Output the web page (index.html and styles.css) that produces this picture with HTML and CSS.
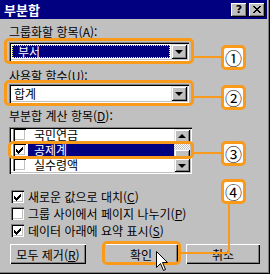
FILE: index.html
```html
<!DOCTYPE html>
<html lang="ko">
<head>
<meta charset="utf-8">
<title>부분합</title>
<link rel="stylesheet" href="styles.css">
</head>
<body>
<div class="win">
  <div class="title">
    <span class="title-text">부분합</span>
    <div class="tbtns">
      <span class="tbtn q">?</span>
      <span class="tbtn"><svg width="8" height="7" viewBox="0 0 8 7" shape-rendering="crispEdges"><path d="M0 0h2v1H0zM6 0h2v1H6zM1 1h2v1H1zM5 1h2v1H5zM2 2h4v1H2zM3 3h2v1H3zM2 4h4v1H2zM1 5h2v1H1zM5 5h2v1H5zM0 6h2v1H0zM6 6h2v1H6z" fill="#000"/></svg></span>
    </div>
  </div>
  <div class="body">
    <div class="label l1">그룹화할 항목(<u>A</u>):</div>
    <div class="combo c1">
      <div class="val"><span class="sel">부서</span></div>
      <div class="ddbtn"><span class="tri-down"></span></div>
    </div>
    <div class="label l2">사용할 함수(<u>U</u>):</div>
    <div class="combo c2">
      <div class="val plain">합계</div>
      <div class="ddbtn"><span class="tri-down"></span></div>
    </div>
    <div class="label l3">부분합 계산 항목(<u>D</u>):</div>
    <div class="list">
      <div class="items">
        <div class="items-inner">
          <div class="item"><span class="cb"></span><span class="txt">국민연금</span></div>
          <div class="item selected"><span class="cb"><svg class="ck" width="9" height="9" viewBox="0 0 9 9" shape-rendering="crispEdges"><path d="M0 3h1v3H0zM1 4h1v3H1zM2 5h1v3H2zM3 4h1v3H3zM4 3h1v3H4zM5 2h1v3H5zM6 1h1v3H6z" fill="#000"/></svg></span><span class="txt">공제계</span></div>
          <div class="item"><span class="cb"></span><span class="txt">실수령액</span></div>
        </div>
      </div>
      <div class="vscroll">
        <div class="sbtn"><span class="tri-up"></span></div>
        <div class="track"><div class="thumb"></div></div>
        <div class="sbtn"><span class="tri-down"></span></div>
      </div>
    </div>
    <div class="checks">
      <div class="chk"><span class="cb"><svg class="ck" width="9" height="9" viewBox="0 0 9 9" shape-rendering="crispEdges"><path d="M0 3h1v3H0zM1 4h1v3H1zM2 5h1v3H2zM3 4h1v3H3zM4 3h1v3H4zM5 2h1v3H5zM6 1h1v3H6z" fill="#000"/></svg></span><span>새로운 값으로 대치(<u>C</u>)</span></div>
      <div class="chk"><span class="cb"></span><span>그룹 사이에서 페이지 나누기(<u>P</u>)</span></div>
      <div class="chk"><span class="cb"><svg class="ck" width="9" height="9" viewBox="0 0 9 9" shape-rendering="crispEdges"><path d="M0 3h1v3H0zM1 4h1v3H1zM2 5h1v3H2zM3 4h1v3H3zM4 3h1v3H4zM5 2h1v3H5zM6 1h1v3H6z" fill="#000"/></svg></span><span>데이터 아래에 요약 표시(<u>S</u>)</span></div>
    </div>
    <div class="buttons">
      <div class="btn b1">모두 제거(<u>R</u>)</div>
      <div class="btn b2">확인</div>
      <div class="btn b3">취소</div>
    </div>
  </div>

  <div class="ann box1"></div>
  <div class="ann box2"></div>
  <div class="ann box3"></div>
  <div class="ann box4"></div>
  <div class="line h1"></div>
  <div class="line h2"></div>
  <div class="line h3"></div>
  <div class="line v4"></div>
  <div class="line h4"></div>
  <div class="num n1">①</div>
  <div class="num n2">②</div>
  <div class="num n3">③</div>
  <div class="num n4">④</div>
  <svg class="cursor" width="12" height="20" viewBox="0 0 12 20"><path d="M0.5 0.5V16.5L4.5 12.5L7.5 19.5L9.5 18.5L6.5 11.5H11.5Z" fill="#fff" stroke="#000" stroke-width="1"/></svg>
</div>
</body>
</html>
```

FILE: styles.css
```css
* { box-sizing: border-box; margin: 0; padding: 0; }
html, body { width: 270px; height: 274px; overflow: hidden; }
body {
  background: #c0c0c0;
  font-family: "Noto Sans CJK KR", "DejaVu Sans", sans-serif;
  font-size: 12px;
  color: #000;
}
u { text-decoration: underline; text-underline-offset: 1px; }

.win {
  position: relative;
  width: 270px;
  height: 274px;
  background: #c0c0c0;
  padding-right: 3px;
  box-shadow: inset -1px -1px #000, inset -2px -2px #808080;
}

.title {
  height: 19px;
  background: #000080;
  color: #fff;
  display: flex;
  align-items: center;
  justify-content: space-between;
  padding: 0 2px 0 4px;
  font-weight: bold;
  font-size: 13px;
  line-height: 19px;
}
.tbtns { display: flex; gap: 2px; }
.tbtn {
  width: 16px;
  height: 14px;
  background: #c0c0c0;
  color: #000;
  display: flex;
  align-items: center;
  justify-content: center;
  font-family: "DejaVu Sans", sans-serif;
  font-size: 11px;
  font-weight: bold;
  box-shadow: inset -1px -1px #000, inset 1px 1px #fff, inset -2px -2px #808080;
}

.body { padding-left: 9px; }
.label { height: 13px; line-height: 13px; white-space: nowrap; }
.l1 { margin-top: 6px; }
.l2 { margin-top: 8px; }
.l3 { margin-top: 6px; }

.combo {
  display: flex;
  width: 180px;
  height: 19px;
  margin-top: 4px;
  padding: 2px;
  background: #fff;
  box-shadow: inset 1px 1px #808080, inset 2px 2px #000, inset -1px -1px #fff, inset -2px -2px #c0c0c0;
}
.c2 { margin-top: 2px; }
.val { flex: 1; display: flex; padding: 1px; }
.val.plain { padding-left: 3px; line-height: 13px; }
.sel {
  flex: 1;
  background: #000080;
  color: #fff;
  line-height: 13px;
  padding-left: 6px;
  outline: 1px dotted #ffff60;
  outline-offset: -1px;
}
.ddbtn {
  width: 16px;
  height: 15px;
  background: #c0c0c0;
  display: flex;
  align-items: center;
  justify-content: center;
  box-shadow: inset 1px 1px #dfdfdf, inset -1px -1px #000, inset 2px 2px #fff, inset -2px -2px #808080;
}
.tri-down {
  width: 0; height: 0;
  border-left: 4px solid transparent;
  border-right: 4px solid transparent;
  border-top: 4px solid #000;
  margin-top: 1px;
}
.tri-up {
  width: 0; height: 0;
  border-left: 4px solid transparent;
  border-right: 4px solid transparent;
  border-bottom: 4px solid #000;
}

.list {
  display: flex;
  width: 183px;
  height: 47px;
  margin-top: 5px;
  padding: 2px;
  background: #fff;
  box-shadow: inset 1px 1px #808080, inset 2px 2px #000, inset -1px -1px #fff, inset -2px -2px #c0c0c0;
}
.items { flex: 1; overflow: hidden; }
.items-inner { margin-top: -2px; }
.item {
  height: 15px;
  display: flex;
  align-items: center;
  padding-left: 2px;
  overflow: hidden;
}
.item .txt { flex: 1; line-height: 13px; height: 13px; padding-left: 6px; margin-left: 2px; }
.item.selected .txt { background: #000080; color: #fff; }

.cb {
  width: 13px;
  height: 13px;
  flex: none;
  background: #fff;
  display: flex;
  align-items: center;
  justify-content: center;
  box-shadow: inset 1px 1px #808080, inset 2px 2px #000, inset -1px -1px #fff, inset -2px -2px #c0c0c0;
}
.ck { margin: 1px 0 0 1px; }

.vscroll { width: 16px; display: flex; flex-direction: column; }
.sbtn {
  height: 14px;
  background: #c0c0c0;
  display: flex;
  align-items: center;
  justify-content: center;
  box-shadow: inset 1px 1px #dfdfdf, inset -1px -1px #000, inset 2px 2px #fff, inset -2px -2px #808080;
}
.track {
  flex: 1;
  display: flex;
  flex-direction: column;
  justify-content: flex-end;
  background-color: #fff;
  background-image: conic-gradient(#c0c0c0 25%, #fff 0 50%, #c0c0c0 0 75%, #fff 0);
  background-size: 2px 2px;
}
.thumb {
  height: 9px;
  background: #c0c0c0;
  box-shadow: inset 1px 1px #dfdfdf, inset -1px -1px #000, inset 2px 2px #fff, inset -2px -2px #808080;
}

.checks { margin-top: 16px; display: flex; flex-direction: column; gap: 4px; }
.chk {
  height: 13px;
  display: flex;
  align-items: center;
  gap: 4px;
  padding-left: 2px;
  line-height: 13px;
  white-space: nowrap;
}

.buttons { margin-top: 7px; display: flex; }
.btn {
  height: 20px;
  background: #c0c0c0;
  display: flex;
  align-items: center;
  justify-content: center;
  white-space: nowrap;
  box-shadow: inset 1px 1px #fff, inset -1px -1px #000, inset -2px -2px #808080;
}
.b1 { width: 76px; margin-left: 1px; }
.b2 { width: 74px; margin-left: 18px; }
.b3 { width: 74px; margin-left: 8px; }

/* annotations */
.ann {
  position: absolute;
  border: 3px solid #fa9a1a;
  border-radius: 5px;
}
.box1 { left: 4px; top: 38px; width: 190px; height: 26px; }
.box2 { left: 4px; top: 80px; width: 190px; height: 26px; }
.box3 { left: 8px; top: 141px; width: 186px; height: 18px; }
.box4 { left: 102px; top: 241px; width: 79px; height: 24px; }
.line { position: absolute; background: #fa9a1a; }
.h1 { left: 193px; top: 56px; width: 30px; height: 2px; }
.h2 { left: 193px; top: 96px; width: 30px; height: 2px; }
.h3 { left: 193px; top: 152px; width: 30px; height: 2px; }
.v4 { left: 228px; top: 202px; width: 2px; height: 52px; }
.h4 { left: 180px; top: 252px; width: 50px; height: 2px; }
.num {
  position: absolute;
  left: 221px;
  width: 25px;
  height: 25px;
  background: #fff;
  border: 3px solid #fa9a1a;
  border-radius: 5px;
  display: flex;
  align-items: center;
  justify-content: center;
  font-size: 17px;
  line-height: 1;
}
.n1 { top: 45px; }
.n2 { top: 85px; }
.n3 { top: 141px; }
.n4 { top: 179px; }
.cursor { position: absolute; left: 156px; top: 251px; }
```
